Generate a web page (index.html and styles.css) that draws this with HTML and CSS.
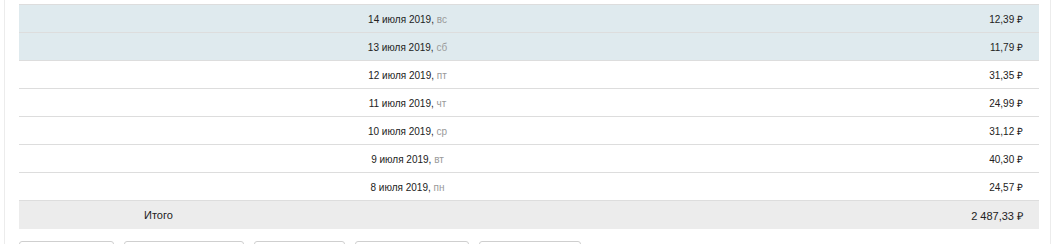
FILE: index.html
```html
<!DOCTYPE html>
<html lang="ru">
<head>
<meta charset="utf-8">
<link rel="stylesheet" href="styles.css">
</head>
<body>
<div class="panel">
  <div class="table">
    <div class="row hl"><div class="date">14 июля 2019, <span class="wd">вс</span></div><div class="sum">12,39 ₽</div></div>
    <div class="row hl"><div class="date">13 июля 2019, <span class="wd">сб</span></div><div class="sum">11,79 ₽</div></div>
    <div class="row"><div class="date">12 июля 2019, <span class="wd">пт</span></div><div class="sum">31,35 ₽</div></div>
    <div class="row"><div class="date">11 июля 2019, <span class="wd">чт</span></div><div class="sum">24,99 ₽</div></div>
    <div class="row"><div class="date">10 июля 2019, <span class="wd">ср</span></div><div class="sum">31,12 ₽</div></div>
    <div class="row"><div class="date">9 июля 2019, <span class="wd">вт</span></div><div class="sum">40,30 ₽</div></div>
    <div class="row"><div class="date">8 июля 2019, <span class="wd">пн</span></div><div class="sum">24,57 ₽</div></div>
    <div class="row total"><div class="label">Итого</div><div class="sum">2 487,33 ₽</div></div>
  </div>
  <div class="buttons">
    <button class="btn w1"></button>
    <button class="btn w2"></button>
    <button class="btn w3"></button>
    <button class="btn w4"></button>
    <button class="btn w5"></button>
  </div>
</div>
</body>
</html>
```

FILE: styles.css
```css
html, body {
  margin: 0;
  padding: 0;
  background: #fff;
}
body {
  font-family: "Liberation Sans", Arial, sans-serif;
  font-size: 10px;
  color: #222;
  overflow: hidden;
  height: 244px;
}
.panel {
  margin-left: 4px;
  width: 1047px;
  height: 244px;
  border-left: 1px solid #ececec;
  border-right: 1px solid #ececec;
  padding: 4px 0 0 14px;
  box-sizing: border-box;
  overflow: hidden;
}
.table {
  width: 1020px;
  border-top: 1px solid #dddddd;
}
.row {
  display: grid;
  grid-template-columns: 777px 1fr;
  height: 27px;
  align-items: center;
  border-bottom: 1px solid #dddddd;
}
.row.hl {
  background: #dfeaee;
}
.date {
  text-align: center;
  padding-top: 1px;
}
.wd {
  color: #9a9a9a;
}
.sum {
  text-align: right;
  padding-right: 16px;
  padding-top: 1px;
}
.row.total {
  background: #ececec;
  border-bottom: none;
  height: 28px;
  font-size: 11px;
}
.label {
  padding-left: 125px;
}
.buttons {
  display: flex;
  gap: 10px;
  margin-top: 12px;
}
.btn {
  height: 24px;
  border: 1px solid #cfcfcf;
  border-radius: 3px;
  background: #fff;
  padding: 0;
}
.w1 { width: 95px; }
.w2 { width: 120px; }
.w3 { width: 91px; }
.w4 { width: 114px; }
.w5 { width: 102px; }
```
